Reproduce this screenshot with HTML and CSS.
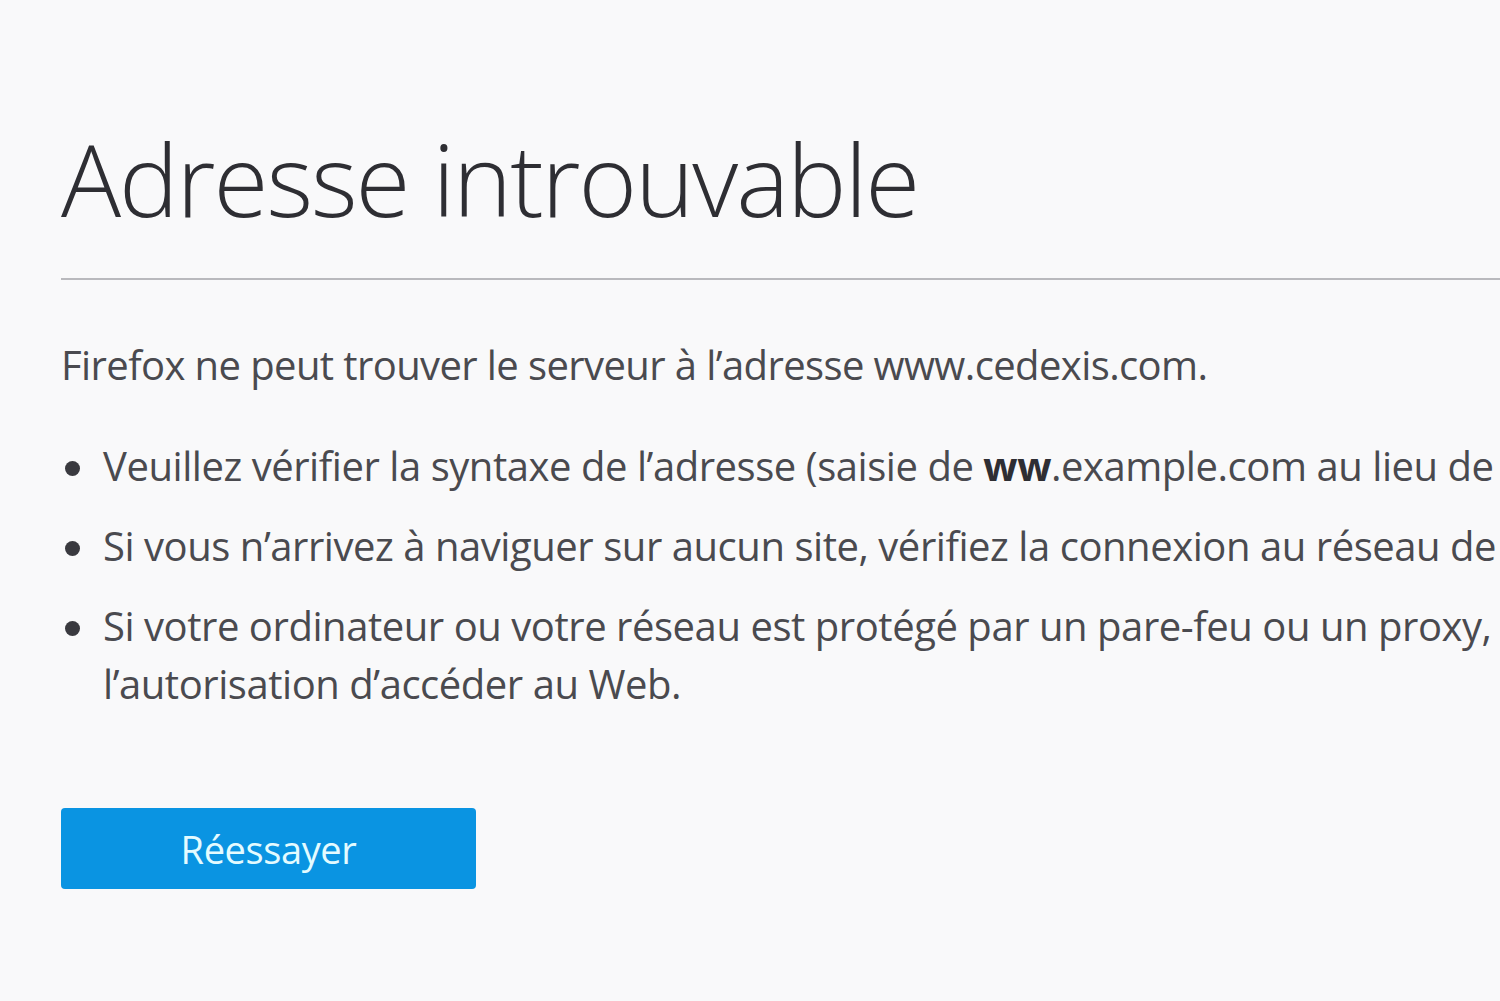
FILE: index.html
```html
<!DOCTYPE html>
<html lang="fr">

<head>
    <meta charset="UTF-8">
    <title>Adresse introuvable</title>
    <link rel="stylesheet" href="styles.css">
</head>

<body>
    <div class="container">
        <div class="title">
            <h1>Adresse introuvable</h1>
        </div>
        <div class="description">
            <p>Firefox ne peut trouver le serveur à l’adresse www.cedexis.com.</p>
            <ul>
                <li>Veuillez vérifier la syntaxe de l’adresse (saisie de <strong>ww</strong>.example.com au lieu de <strong>www</strong>.example.com)</li>
                <li>Si vous n’arrivez à naviguer sur aucun site, vérifiez la connexion au réseau de votre ordinateur.</li>
                <li>Si votre ordinateur ou votre réseau est protégé par un pare-feu ou un proxy, assurez-vous que Firefox a<br>l’autorisation d’accéder au Web.</li>
            </ul>
        </div>
        <div class="actions">
            <button id="retry">Réessayer</button>
        </div>
    </div>
</body>

</html>
```

FILE: styles.css
```css
html,
body {
    margin: 0;
    height: 100%;
    overflow: hidden;
}

body {
    background: #f9f9fa;
    color: #4a4a4f;
    font-family: "Open Sans", "Noto Sans", sans-serif;
}

.container {
    padding-left: 61px;
    padding-top: 113px;
    width: 2400px;
}

.title {
    border-bottom: 2px solid #b9b9bd;
    padding-bottom: 35px;
}

.title>h1 {
    margin: 0;
    font-weight: 300;
    font-size: 100px;
    line-height: 130px;
    color: #2e2e33;
    letter-spacing: -2px;
}

.description>p {
    margin: 57px 0 0 0;
    font-size: 40px;
    line-height: 56px;
    letter-spacing: -0.6px;
}

.description>ul {
    margin: 44px 0 0 0;
    padding-left: 42px;
    list-style: none;
}

.description li {
    position: relative;
    font-size: 40px;
    line-height: 58px;
    letter-spacing: -0.45px;
    margin-bottom: 22px;
    white-space: nowrap;
}

.description li::before {
    content: "";
    position: absolute;
    left: -38px;
    top: 24px;
    width: 15px;
    height: 15px;
    border-radius: 50%;
    background: #3a3a3f;
}

.description strong {
    color: #2e2e33;
}

.actions {
    margin-top: 95px;
}

#retry {
    width: 415px;
    height: 81px;
    background: #0a94e2;
    border: none;
    border-radius: 4px;
    color: #e4fbff;
    font-family: "Open Sans", "Noto Sans", sans-serif;
    font-size: 38px;
    letter-spacing: -0.4px;
}
```
